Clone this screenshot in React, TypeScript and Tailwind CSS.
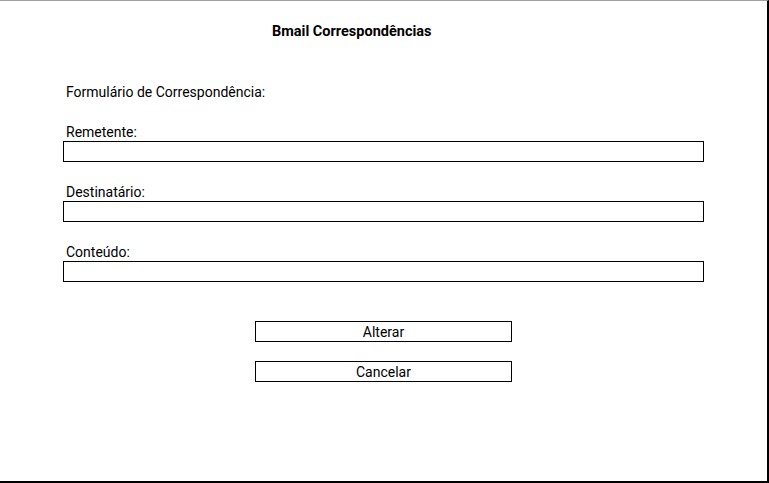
export default function App() {
	const fields = ["Remetente:", "Destinatário:", "Conteúdo:"]

	return (
		<div className="w-[769px] h-[483px] bg-white border-t border-t-[#a0a0a0] border-r-2 border-r-black border-b-2 border-b-black font-['Roboto',sans-serif] text-black">
			<h1 className="mt-[20px] pl-[272px] h-[20px] leading-[21px] text-[14.5px] font-bold">
				Bmail Correspondências
			</h1>

			<div className="pl-[63px]">
				<p className="mt-[40px] pl-[3px] h-[20px] leading-[22px] text-[14px]">
					Formulário de Correspondência:
				</p>

				{fields.map((label, i) => (
					<div key={label} className={i === 0 ? "mt-[20px]" : "mt-[19px]"}>
						<label className="block pl-[3px] h-[20px] leading-[22px] text-[14px]">
							{label}
						</label>
						<input
							type="text"
							className="block w-[641px] h-[21px] border border-black bg-white outline-none"
						/>
					</div>
				))}
			</div>

			<div className="pl-[255px]">
				<button className="mt-[39px] block w-[257px] h-[21px] border border-black bg-white text-[14px] leading-[21px] text-center">
					Alterar
				</button>
				<button className="mt-[19px] block w-[257px] h-[21px] border border-black bg-white text-[14px] leading-[21px] text-center">
					Cancelar
				</button>
			</div>
		</div>
	)
}
